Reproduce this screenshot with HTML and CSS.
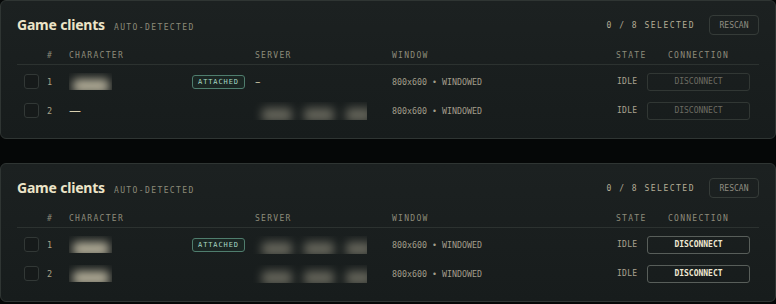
FILE: index.html
```html
<!DOCTYPE html>
<html>
<head>
<meta charset="utf-8">
<link rel="stylesheet" href="styles.css">
</head>
<body>
<div class="page">
  <section class="card">
    <header class="card-head">
      <div class="title-group">
        <h2 class="title">Game clients</h2>
        <span class="sub">AUTO-DETECTED</span>
      </div>
      <div class="actions">
        <span class="count">0 / 8 SELECTED</span>
        <button class="btn-ghost">RESCAN</button>
      </div>
    </header>
    <div class="table">
      <div class="row head">
        <span></span><span>#</span><span>CHARACTER</span><span>SERVER</span><span>WINDOW</span><span>STATE</span><span class="center">CONNECTION</span>
      </div>
      <div class="body">
        <div class="row">
          <span><span class="check"></span></span>
          <span class="num">1</span>
          <span class="char"><span class="redact r-char"><i class="blob w40"></i></span><span class="badge">ATTACHED</span></span>
          <span class="dash-short">–</span>
          <span class="win">800x600 • WINDOWED</span>
          <span class="state">IDLE</span>
          <span><button class="btn-dis" disabled>DISCONNECT</button></span>
        </div>
        <div class="row">
          <span><span class="check"></span></span>
          <span class="num">2</span>
          <span class="char"><span class="dash-sans">—</span></span>
          <span><span class="redact r-server"><i class="blob w34"></i><i class="blob w32"></i><i class="blob w22"></i></span></span>
          <span class="win">800x600 • WINDOWED</span>
          <span class="state">IDLE</span>
          <span><button class="btn-dis" disabled>DISCONNECT</button></span>
        </div>
      </div>
    </div>
  </section>

  <section class="card">
    <header class="card-head">
      <div class="title-group">
        <h2 class="title">Game clients</h2>
        <span class="sub">AUTO-DETECTED</span>
      </div>
      <div class="actions">
        <span class="count">0 / 8 SELECTED</span>
        <button class="btn-ghost">RESCAN</button>
      </div>
    </header>
    <div class="table">
      <div class="row head">
        <span></span><span>#</span><span>CHARACTER</span><span>SERVER</span><span>WINDOW</span><span>STATE</span><span class="center">CONNECTION</span>
      </div>
      <div class="body">
        <div class="row">
          <span><span class="check"></span></span>
          <span class="num">1</span>
          <span class="char"><span class="redact r-char"><i class="blob w40"></i></span><span class="badge">ATTACHED</span></span>
          <span><span class="redact r-server"><i class="blob w34"></i><i class="blob w32"></i><i class="blob w22"></i></span></span>
          <span class="win">800x600 • WINDOWED</span>
          <span class="state">IDLE</span>
          <span><button class="btn-on">DISCONNECT</button></span>
        </div>
        <div class="row">
          <span><span class="check"></span></span>
          <span class="num">2</span>
          <span class="char"><span class="redact r-char"><i class="blob w40"></i></span></span>
          <span><span class="redact r-server"><i class="blob w34"></i><i class="blob w32"></i><i class="blob w22"></i></span></span>
          <span class="win">800x600 • WINDOWED</span>
          <span class="state">IDLE</span>
          <span><button class="btn-on">DISCONNECT</button></span>
        </div>
      </div>
    </div>
  </section>
</div>
</body>
</html>
```
FILE: styles.css
```css
* { box-sizing: border-box; }
html, body { margin: 0; padding: 0; background: #050707; }
body { font-family: "DejaVu Sans Mono", monospace; }

.page {
  display: flex;
  flex-direction: column;
  gap: 24px;
  width: 776px;
}

.card {
  background: linear-gradient(#1c2121, #171c1c);
  border: 1px solid #2f3533;
  border-radius: 6px;
  padding: 14px 16px 13px 16px;
}

.card-head {
  display: flex;
  align-items: center;
  justify-content: space-between;
  height: 20px;
}

.title-group {
  display: flex;
  align-items: baseline;
  gap: 9px;
}

.title {
  margin: 0;
  font-family: "Noto Sans", sans-serif;
  font-weight: 700;
  font-size: 14px;
  letter-spacing: -0.2px;
  color: #ece4c8;
  line-height: 20px;
}

.sub {
  font-size: 8px;
  letter-spacing: 1.4px;
  color: #8b8a78;
}

.actions {
  display: flex;
  align-items: center;
  gap: 14px;
}

.count {
  font-size: 8px;
  letter-spacing: 1.5px;
  color: #b3ad96;
}

.btn-ghost {
  width: 50px;
  height: 20px;
  padding: 0;
  background: transparent;
  border: 1px solid #353b38;
  border-radius: 4px;
  font-family: "DejaVu Sans Mono", monospace;
  font-size: 8px;
  color: #8f8d80;
}

.table { margin-top: 11px; }

.row {
  display: grid;
  grid-template-columns: 30px 22px 186px 137px 224px 31px 103px 1fr;
  align-items: center;
  height: 29px;
}

.row.head {
  height: 19px;
  border-bottom: 1px solid #2c3230;
  font-size: 8px;
  letter-spacing: 1.3px;
  color: #8d8b7a;
}

.center { text-align: center; }

.body { padding-top: 2px; }

.check {
  display: block;
  width: 15px;
  height: 15px;
  margin-left: 7px;
  border: 1px solid #323836;
  border-radius: 3px;
  background: #161a1a;
}

.num {
  font-size: 8.5px;
  color: #a8a288;
}

.char {
  display: flex;
  align-items: center;
  justify-content: space-between;
  padding-right: 10px;
}

.redact {
  display: flex;
  overflow: hidden;
  height: 17px;
  padding-top: 6px;
}
.blob {
  display: block;
  height: 14px;
  border-radius: 4px;
  background: #cbc4ac;
  filter: blur(5px);
  flex: none;
}
.r-char { width: 43px; }
.r-char .blob { margin-left: 4px; opacity: 0.85; }
.r-server { width: 115px; height: 18px; margin-left: -3px; gap: 12px; }
.r-server .blob { opacity: 0.42; margin-left: 0; }
.r-server .blob:first-child { margin-left: 10px; }
.w40 { width: 36px; }
.w34 { width: 30px; }
.w32 { width: 30px; }
.w22 { width: 26px; }

.badge {
  height: 14px;
  padding: 0 5px;
  border: 1px solid #4f7d6d;
  border-radius: 3px;
  background: #1a2623;
  font-size: 7px;
  letter-spacing: 0.9px;
  line-height: 12px;
  color: #a6d6c2;
  width: 53px;
  text-align: center;
}

.dash-short {
  font-family: "DejaVu Sans", sans-serif;
  font-size: 11px;
  line-height: 12px;
  color: #d8d0b0;
}
.dash-sans {
  font-family: "DejaVu Sans", sans-serif;
  font-size: 12px;
  line-height: 12px;
  color: #d8d0b0;
}

.win {
  font-size: 8.3px;
  color: #a39e8b;
}

.state {
  font-size: 8px;
  letter-spacing: 0.3px;
  color: #a8a290;
  padding-left: 1px;
}

.btn-dis, .btn-on {
  display: block;
  width: 103px;
  height: 18px;
  padding: 0;
  background: transparent;
  border-radius: 3px;
  font-family: "DejaVu Sans Mono", monospace;
  font-size: 8px;
}
.btn-dis {
  border: 1px solid #313734;
  color: #6c6b62;
}
.btn-on {
  border: 1px solid #585e5a;
  color: #efe8d2;
  font-weight: 700;
}
```
